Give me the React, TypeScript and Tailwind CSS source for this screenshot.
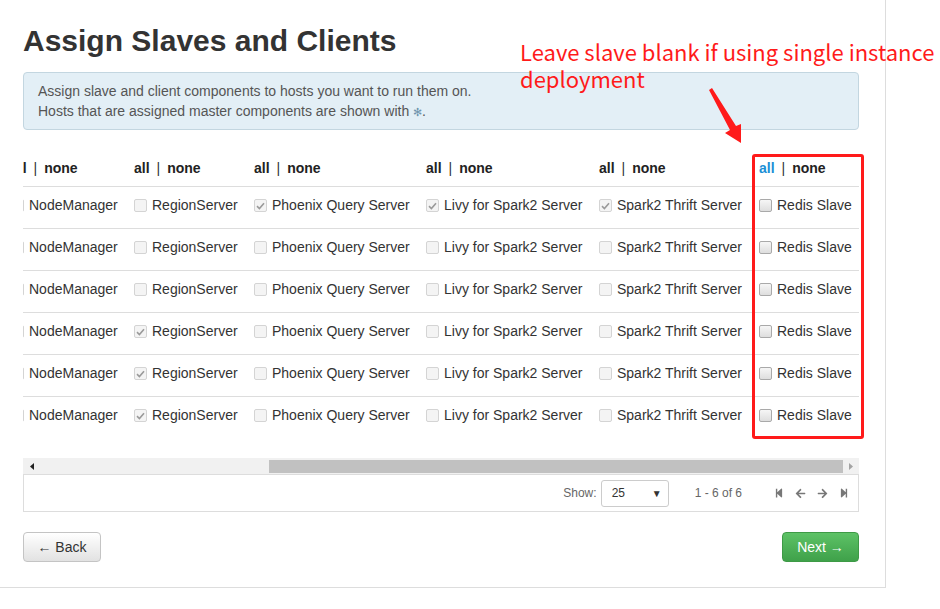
import { FaStepBackward, FaStepForward, FaArrowLeft, FaArrowRight } from "react-icons/fa";

interface HostRow {
    region: boolean;
    phoenix: boolean;
    livy: boolean;
    spark: boolean;
}

const rows: HostRow[] = [
    { region: false, phoenix: true, livy: true, spark: true },
    { region: false, phoenix: false, livy: false, spark: false },
    { region: false, phoenix: false, livy: false, spark: false },
    { region: true, phoenix: false, livy: false, spark: false },
    { region: true, phoenix: false, livy: false, spark: false },
    { region: true, phoenix: false, livy: false, spark: false },
];

function Box({ checked, enabled }: { checked?: boolean; enabled?: boolean }) {
    return (
        <span
            className={
                enabled
                    ? "flex-shrink-0 w-[13px] h-[13px] rounded-[2px] border border-[#a9a9a9] bg-gradient-to-b from-[#f6f6f6] to-[#dedede] flex items-center justify-center"
                    : "flex-shrink-0 w-[13px] h-[13px] rounded-[2px] border border-[#d4d4d4] bg-[#f4f4f4] flex items-center justify-center"
            }
        >
            {checked && (
                <svg width="9" height="8" viewBox="0 0 9 8">
                    <path d="M1 4.2 L3.4 6.5 L8 1.2" stroke="#9a9a9a" strokeWidth="1.6" fill="none" />
                </svg>
            )}
        </span>
    );
}

function Cell({ label, checked, enabled }: { label: string; checked?: boolean; enabled?: boolean }) {
    return (
        <div className="flex items-center gap-[5px]">
            <Box checked={checked} enabled={enabled} />
            <span className="whitespace-nowrap">{label}</span>
        </div>
    );
}

function AllNone({ blue }: { blue?: boolean }) {
    return (
        <div className="whitespace-nowrap">
            <span className={blue ? "font-bold text-[#1b8fd6]" : "font-bold text-[#222]"}>all</span>
            <span className="mx-[7px] text-[#333]">|</span>
            <span className="font-bold text-[#222]">none</span>
        </div>
    );
}

const cols = "grid grid-cols-[123px_120px_172px_173px_160px_110px]";

export default function App() {
    return (
        <div
            className="relative w-[940px] h-[609px] bg-white overflow-hidden text-[14px] text-[#333]"
            style={{ fontFamily: '"Liberation Sans", Arial, sans-serif' }}
        >
            <div className="w-[886px] h-[588px] border-r border-b border-[#dddddd] pl-[23px]">
                <div className="w-[836px]">
                    <h1 className="pt-[24px] text-[30px] leading-[33px] font-bold text-[#333]">
                        Assign Slaves and Clients
                    </h1>

                    <div className="mt-[15px] h-[58px] rounded-[4px] border border-[#c3d6e0] bg-[#e3eff6] px-[14px] py-[8px] leading-[20px] text-[#555]">
                        <div>Assign slave and client components to hosts you want to run them on.</div>
                        <div>
                            Hosts that are assigned master components are shown with{" "}
                            <span className="text-[11px] text-[#6f94ad]">✻</span>.
                        </div>
                    </div>

                    {/* table, scrolled to the right */}
                    <div className="mt-[20px] overflow-hidden">
                        <div className="-ml-[12px]">
                            <div className={`${cols} h-[36px] items-center`}>
                                <AllNone />
                                <AllNone />
                                <AllNone />
                                <AllNone />
                                <AllNone />
                                <AllNone blue />
                            </div>
                            {rows.map((r, i) => (
                                <div key={i} className="ml-[12px] border-t border-[#dddddd]">
                                    <div className={`${cols} -ml-[12px] h-[41px] items-center pb-[4px]`}>
                                        <Cell label="NodeManager" />
                                        <Cell label="RegionServer" checked={r.region} />
                                        <Cell label="Phoenix Query Server" checked={r.phoenix} />
                                        <Cell label="Livy for Spark2 Server" checked={r.livy} />
                                        <Cell label="Spark2 Thrift Server" checked={r.spark} />
                                        <Cell label="Redis Slave" enabled />
                                    </div>
                                </div>
                            ))}
                        </div>
                    </div>

                    {/* scrollbar */}
                    <div className="mt-[20px] h-[17px] bg-[#f1f1f1] border-b border-[#dddddd] flex items-center">
                        <div className="w-[246px] flex items-center pl-[7px]">
                            <svg width="4" height="7" viewBox="0 0 4 7">
                                <path d="M4 0 L0 3.5 L4 7 Z" fill="#222" />
                            </svg>
                        </div>
                        <div className="w-[574px] h-[13px] bg-[#c1c1c1]" />
                        <div className="flex-1 flex items-center justify-center">
                            <svg width="4" height="7" viewBox="0 0 4 7">
                                <path d="M0 0 L4 3.5 L0 7 Z" fill="#a3a3a3" />
                            </svg>
                        </div>
                    </div>

                    <div className="h-[37px] border-l border-r border-b border-[#dddddd] flex items-center justify-end pr-[9px] text-[12px] text-[#666]">
                        <span>Show:</span>
                        <div className="ml-[4px] w-[68px] h-[27px] rounded-[3px] border border-[#cccccc] flex items-center justify-between pl-[10px] pr-[6px] text-[#333]">
                            <span>25</span>
                            <span className="text-[10px] text-[#333]">▼</span>
                        </div>
                        <span className="ml-[26px]">1 - 6 of 6</span>
                        <div className="ml-[32px] flex items-center gap-[11px] text-[#777]">
                            <FaStepBackward size={10} />
                            <FaArrowLeft size={11} />
                            <FaArrowRight size={11} />
                            <FaStepForward size={10} />
                        </div>
                    </div>

                    <div className="mt-[20px] flex justify-between">
                        <button className="w-[78px] h-[30px] rounded-[4px] border border-[#c4c4c4] bg-gradient-to-b from-white to-[#e2e2e2] text-[#333]">
                            ← Back
                        </button>
                        <button className="w-[77px] h-[30px] rounded-[4px] border border-[#3e9a46] bg-gradient-to-b from-[#5dc266] to-[#3fa14a] text-white">
                            Next →
                        </button>
                    </div>
                </div>
            </div>

            {/* annotation overlay */}
            <div
                className="absolute left-[520px] top-[38px] text-[22px] leading-[27px] text-[#ff1a1a] whitespace-nowrap"
                style={{ fontFamily: '"Noto Sans CJK SC", "Noto Sans", sans-serif' }}
            >
                <div>Leave slave blank if using single instance</div>
                <div>deployment</div>
            </div>
            <svg className="absolute left-0 top-0 pointer-events-none" width="940" height="609">
                <path d="M709 90 L712 88 L736 126 L741 124 L741 143 L725 133 L730 130 Z" fill="#ff1a1a" />
            </svg>
            <div className="absolute left-[752px] top-[154px] w-[112px] h-[285px] border-[3px] border-[#ff1a1a] rounded-[3px] pointer-events-none" />
        </div>
    );
}
